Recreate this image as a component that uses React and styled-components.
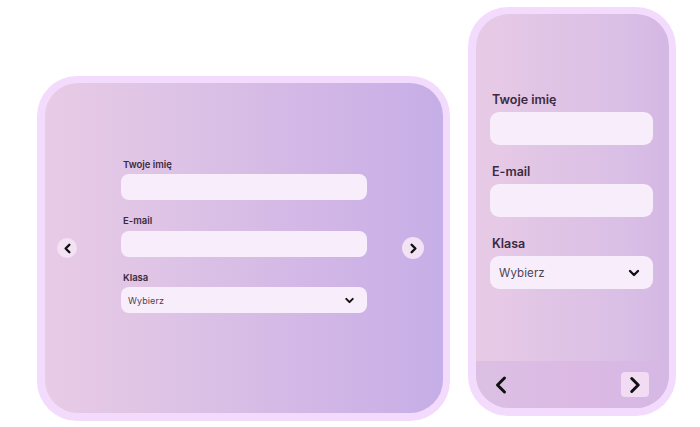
import React from 'react';
import styled, { createGlobalStyle } from 'styled-components';

const GlobalStyle = createGlobalStyle`
	html, body {
		margin: 0;
		padding: 0;
		background: #ffffff;
	}
	body {
		font-family: 'Inter', 'Noto Sans', sans-serif;
		color: #3b2a3f;
	}
`;

const gradients = {
	tablet: 'linear-gradient(90deg, #e8cbe5 0%, #dcc2e5 35%, #d3b7e6 65%, #c6aee6 100%)',
	phone: 'linear-gradient(90deg, #e7cbe5 0%, #e0c4e5 40%, #dbc0e6 70%, #d4b8e4 100%)',
};

const Stage = styled.div`
	width: 700px;
	height: 427px;
	display: flex;
	align-items: flex-start;
	gap: 18px;
	padding-left: 37px;
	box-sizing: border-box;
	overflow: hidden;
`;

const Frame = styled.div`
	margin-top: ${({ offset }) => offset}px;
	width: ${({ w }) => w}px;
	height: ${({ h }) => h}px;
	padding: 7px 7px 8px 8px;
	box-sizing: border-box;
	background: #f3dbfd;
	border-radius: ${({ radius }) => radius}px;
	flex-shrink: 0;
`;

const Screen = styled.div`
	width: 100%;
	height: 100%;
	border-radius: ${({ radius }) => radius}px;
	background: ${({ variant }) => gradients[variant]};
	overflow: hidden;
	display: flex;
	flex-direction: column;
	box-sizing: border-box;
`;

const TabletBody = styled.div`
	flex: 1;
	display: grid;
	grid-template-columns: 1fr 246px 1fr;
	align-items: center;
`;

const RoundNav = styled.button`
	width: ${({ size }) => size}px;
	height: ${({ size }) => size}px;
	margin-left: ${({ inset }) => inset}px;
	justify-self: start;
	border: none;
	border-radius: 50%;
	padding: 0;
	background: #f2e2f3;
	display: flex;
	align-items: center;
	justify-content: center;
	cursor: pointer;
`;

const Form = styled.form`
	width: ${({ w }) => w}px;
	display: flex;
	flex-direction: column;
	margin-bottom: ${({ lift }) => lift || 0}px;
	padding-top: ${({ top }) => top || 0}px;
`;

const Label = styled.label`
	font-size: ${({ small }) => (small ? 9.5 : 12.5)}px;
	font-weight: 600;
	color: #3b2a3f;
	margin: 0 0 ${({ small }) => (small ? 4 : 5)}px 2px;
	margin-top: ${({ first, small }) => (first ? 0 : small ? 15 : 19)}px;
	line-height: 1.2;
`;

const Field = styled.div`
	height: ${({ small }) => (small ? 26 : 33)}px;
	border-radius: ${({ small }) => (small ? 8 : 9)}px;
	background: #f8eefb;
	display: flex;
	align-items: center;
	justify-content: space-between;
	padding: 0 11px 0 ${({ small }) => (small ? 7 : 9)}px;
	box-sizing: border-box;
`;

const Placeholder = styled.span`
	font-size: ${({ small }) => (small ? 9 : 11.5)}px;
	color: #4f4253;
	letter-spacing: 0.1px;
`;

const PhoneBody = styled.div`
	flex: 1;
	padding: 0 16px 0 14px;
`;

const BottomBar = styled.div`
	height: 47px;
	flex-shrink: 0;
	background: linear-gradient(90deg, #dcc0e3 0%, #dbb9e3 50%, #d6b8e5 100%);
	display: flex;
	align-items: center;
	justify-content: space-between;
	padding: 0 20px 0 15px;
`;

const BarButton = styled.button`
	width: ${({ boxed }) => (boxed ? 28 : 20)}px;
	height: 25px;
	border: none;
	padding: 0;
	border-radius: 4px;
	background: ${({ boxed }) => (boxed ? '#f1dcf4' : 'transparent')};
	display: flex;
	align-items: center;
	justify-content: center;
	cursor: pointer;
`;

const Glyph = styled.svg`
	flex-shrink: 0;
	display: block;
`;

const Chevron = ({ dir = 'right', size = 10, stroke = 2.6 }) => {
	const points = {
		right: '9,6 15,12 9,18',
		left: '15,6 9,12 15,18',
		down: '6,9 12,15 18,9',
	}[dir];
	return (
		<Glyph width={size} height={size} viewBox="0 0 24 24" fill="none">
			<polyline
				points={points}
				stroke="#111"
				strokeWidth={stroke * (24 / size)}
				strokeLinecap="round"
				strokeLinejoin="round"
			/>
		</Glyph>
	);
};

const fields = [
	{ id: 'name', label: 'Twoje imię' },
	{ id: 'email', label: 'E-mail' },
	{ id: 'class', label: 'Klasa', select: 'Wybierz' },
];

const SignupFields = ({ small }) =>
	fields.map(({ id, label, select }, i) => (
		<React.Fragment key={id}>
			<Label small={small} first={i === 0}>
				{label}
			</Label>
			<Field small={small}>
				{select && <Placeholder small={small}>{select}</Placeholder>}
				{select && <Chevron dir="down" size={small ? 13 : 16} stroke={small ? 2 : 2.3} />}
			</Field>
		</React.Fragment>
	));

const App = () => (
	<>
		<GlobalStyle />
		<Stage>
			<Frame offset={76} w={413} h={345} radius={40}>
				<Screen variant="tablet" radius={33}>
					<TabletBody>
						<RoundNav size={20} inset={12} aria-label="wstecz">
							<Chevron dir="left" size={15} stroke={2.4} />
						</RoundNav>
						<Form w={246} lift={24}>
							<SignupFields small />
						</Form>
						<RoundNav size={22} inset={35} aria-label="dalej">
							<Chevron dir="right" size={15} stroke={2.4} />
						</RoundNav>
					</TabletBody>
				</Screen>
			</Frame>
			<Frame offset={7} w={208} h={409} radius={40}>
				<Screen variant="phone" radius={33}>
					<PhoneBody>
						<Form w={163} top={78}>
							<SignupFields />
						</Form>
					</PhoneBody>
					<BottomBar>
						<BarButton aria-label="wstecz">
							<Chevron dir="left" size={28} stroke={3} />
						</BarButton>
						<BarButton boxed aria-label="dalej">
							<Chevron dir="right" size={26} stroke={3} />
						</BarButton>
					</BottomBar>
				</Screen>
			</Frame>
		</Stage>
	</>
);

export default App;
